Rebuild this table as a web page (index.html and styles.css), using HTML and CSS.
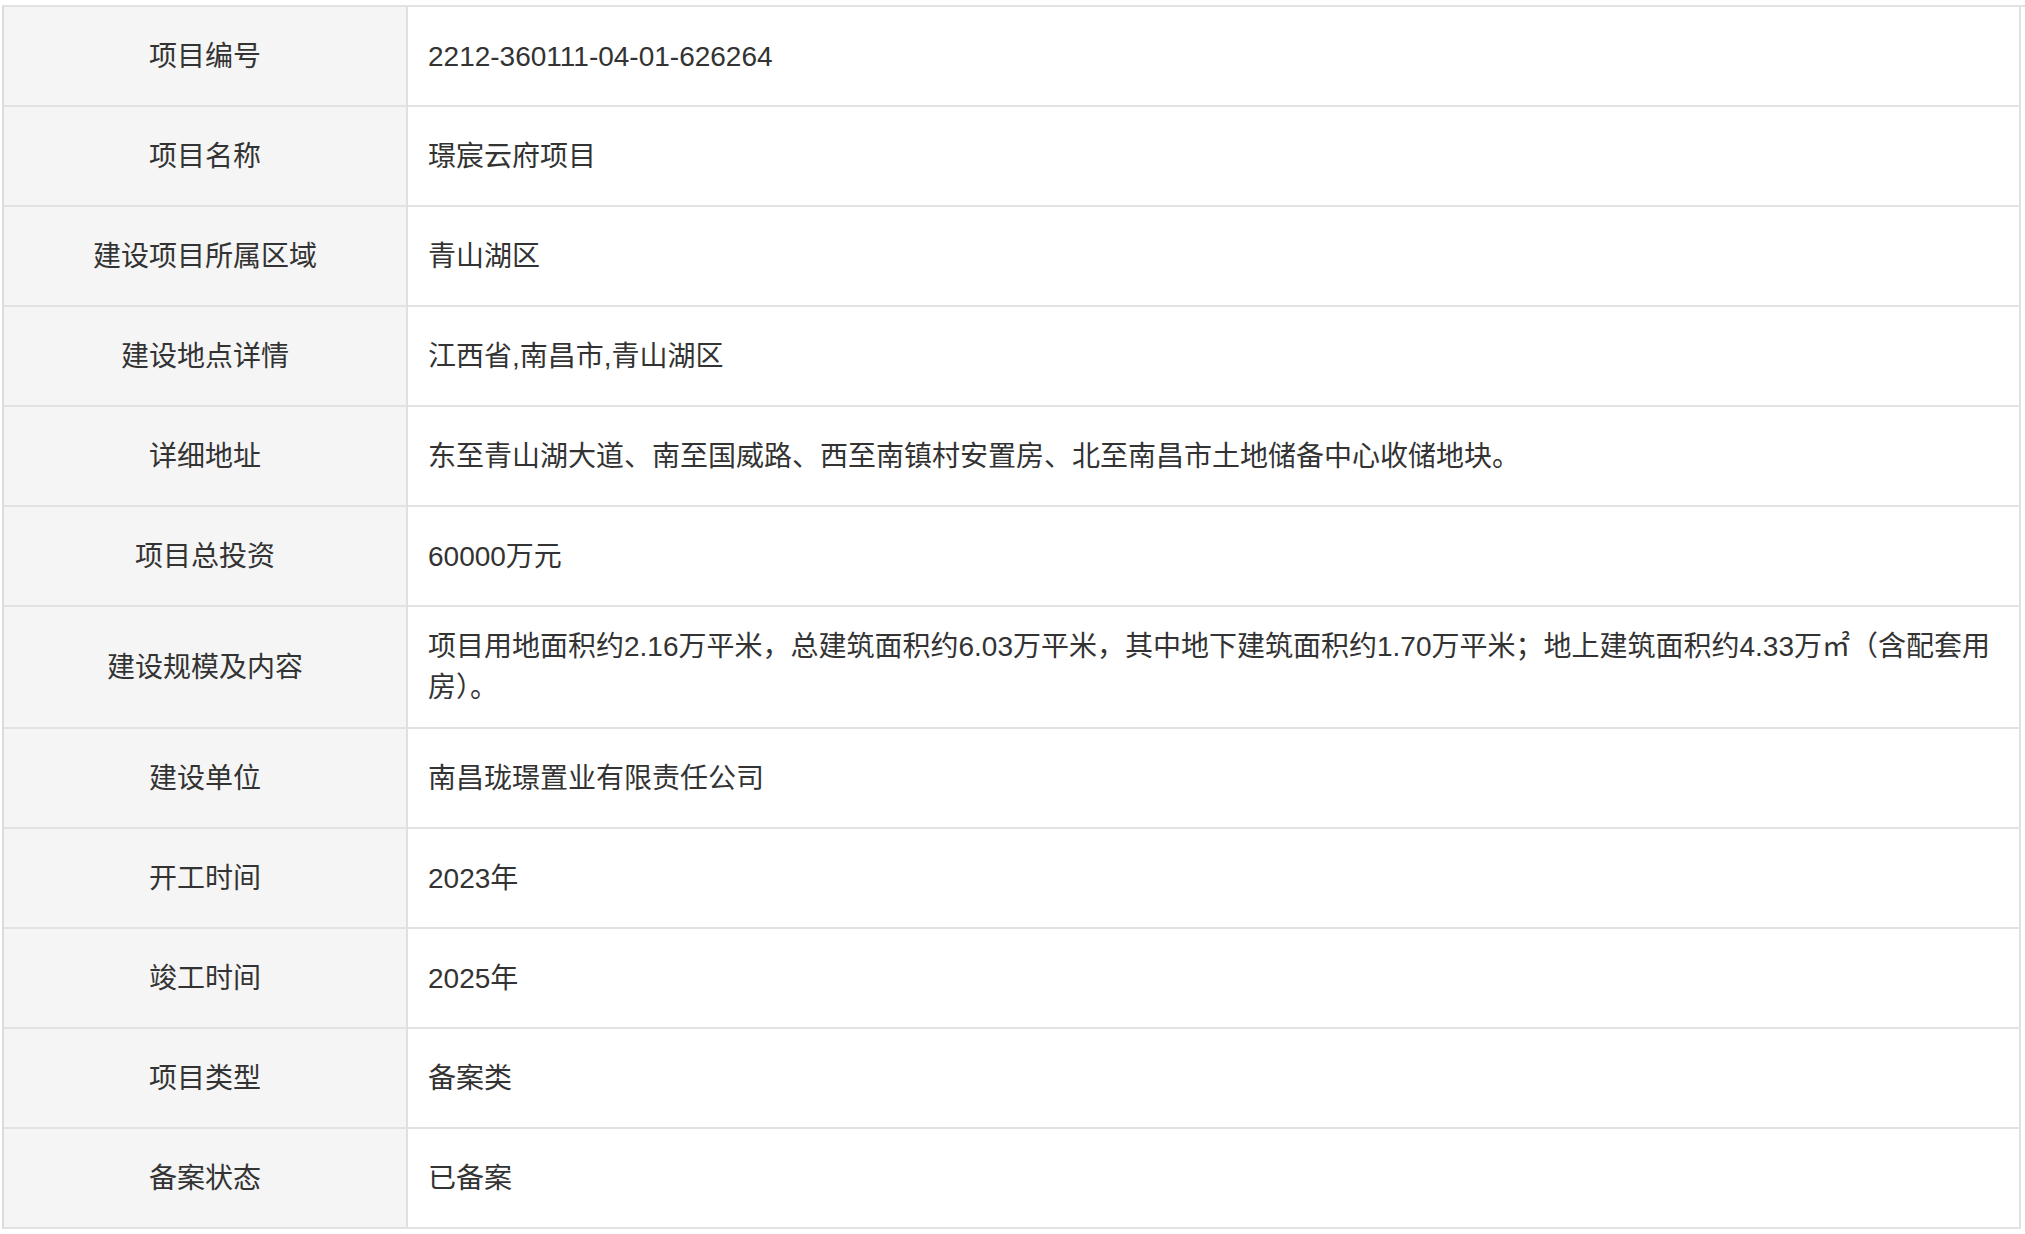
FILE: index.html
```html
<!DOCTYPE html>
<html lang="zh-CN">
<head>
<meta charset="utf-8">
<title>项目信息</title>
<link rel="stylesheet" href="styles.css">
</head>
<body>
<div class="info-table">
  <div class="cell label">项目编号</div>
  <div class="cell value">2212-360111-04-01-626264</div>
  <div class="cell label">项目名称</div>
  <div class="cell value">璟宸云府项目</div>
  <div class="cell label">建设项目所属区域</div>
  <div class="cell value">青山湖区</div>
  <div class="cell label">建设地点详情</div>
  <div class="cell value">江西省,南昌市,青山湖区</div>
  <div class="cell label">详细地址</div>
  <div class="cell value">东至青山湖大道、南至国威路、西至南镇村安置房、北至南昌市土地储备中心收储地块。</div>
  <div class="cell label">项目总投资</div>
  <div class="cell value">60000万元</div>
  <div class="cell label">建设规模及内容</div>
  <div class="cell value">项目用地面积约2.16万平米，总建筑面积约6.03万平米，其中地下建筑面积约1.70万平米；地上建筑面积约4.33万㎡（含配套用房）。</div>
  <div class="cell label">建设单位</div>
  <div class="cell value">南昌珑璟置业有限责任公司</div>
  <div class="cell label">开工时间</div>
  <div class="cell value">2023年</div>
  <div class="cell label">竣工时间</div>
  <div class="cell value">2025年</div>
  <div class="cell label">项目类型</div>
  <div class="cell value">备案类</div>
  <div class="cell label">备案状态</div>
  <div class="cell value">已备案</div>
</div>
</body>
</html>
```

FILE: styles.css
```css
html, body {
  margin: 0;
  padding: 0;
  background: #ffffff;
}

body {
  font-family: "Liberation Sans", "Noto Sans CJK SC", sans-serif;
  font-size: 28px;
  color: #333333;
}

.info-table {
  display: grid;
  grid-template-columns: 404px 1613px;
  margin: 5px 0 0 2px;
  border-top: 2px solid #e2e2e2;
  border-left: 2px solid #dcdcdc;
}

.cell {
  box-sizing: border-box;
  min-height: 100px;
  padding: 19px 20px;
  line-height: 41px;
  display: flex;
  align-items: center;
  border-bottom: 2px solid #e2e2e2;
  border-right: 2px solid #e0e0e0;
}

.label {
  background: #f5f5f5;
  justify-content: center;
  text-align: center;
}

.value {
  background: #ffffff;
}
```
